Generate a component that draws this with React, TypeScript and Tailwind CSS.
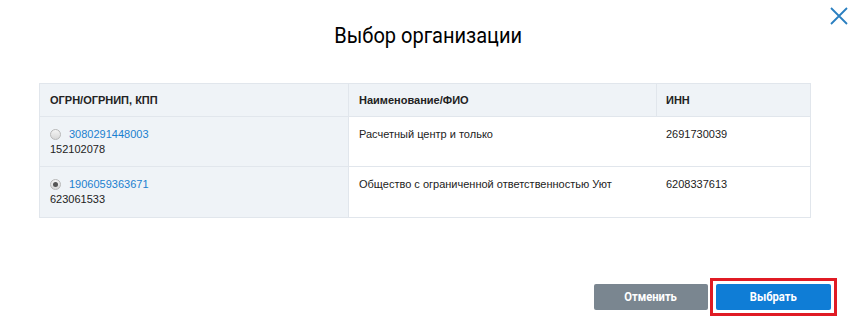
import React from "react";

const rows = [
  { ogrn: "3080291448003", kpp: "152102078", name: "Расчетный центр и только", inn: "2691730039", checked: false },
  { ogrn: "1906059363671", kpp: "623061533", name: "Общество с ограниченной ответственностью Уют", inn: "6208337613", checked: true },
];

export default function App() {
  return (
    <div className="w-[857px] h-[327px] bg-white relative overflow-hidden" style={{ fontFamily: "'Liberation Sans', Arial, sans-serif" }}>
      <button className="absolute left-[830px] top-[7px] w-[18px] h-[18px]">
        <svg width="18" height="18" viewBox="0 0 18 18">
          <path d="M1 1 L17 17 M17 1 L1 17" stroke="#2a7fc0" strokeWidth="1.8" fill="none" />
        </svg>
      </button>
      <div className="flex flex-col h-full">
        <h1 className="text-center text-[22px] leading-[26px] pt-[23px] text-black" style={{ fontFamily: "Roboto, sans-serif" }}>
          <span className="inline-block scale-x-[0.91]">Выбор организации</span>
        </h1>
        <div className="pl-[39px] pt-[34px]">
          <div className="w-[772px] border border-[#e1e6ec] text-[11px] text-[#222]">
            <div className="grid grid-cols-[309px_308px_1fr] bg-[#eff3f7] h-[33px] items-center font-bold text-[11px] border-b border-[#e1e6ec]">
              <div className="pl-[10px] h-full flex items-center border-r border-[#e1e6ec]">ОГРН/ОГРНИП, КПП</div>
              <div className="pl-[10px] h-full flex items-center border-r border-[#e1e6ec]">Наименование/ФИО</div>
              <div className="pl-[9px]">ИНН</div>
            </div>
            {rows.map((r, i) => (
              <div key={i} className={`grid grid-cols-[309px_308px_1fr] h-[50px] ${i === 0 ? "border-b border-[#e1e6ec]" : ""}`}>
                <div className="bg-[#eff3f7] border-r border-[#e1e6ec] pl-[10px] pt-[10px] leading-[15px]">
                  <div className="flex items-center">
                    <span className="w-[11px] h-[11px] rounded-full border border-[#b8b8b8] bg-gradient-to-b from-[#f4f4f4] to-[#d8d8d8] flex items-center justify-center mr-[8px]">
                      {r.checked && <span className="w-[5px] h-[5px] rounded-full bg-[#555]" />}
                    </span>
                    <span className="text-[#1b7fcf]">{r.ogrn}</span>
                  </div>
                  <div>{r.kpp}</div>
                </div>
                <div className="pl-[10px] pt-[10px] leading-[15px]">{r.name}</div>
                <div className="pl-[9px] pt-[10px] leading-[15px]">{r.inn}</div>
              </div>
            ))}
          </div>
        </div>
        <div className="mt-auto flex justify-end items-center pr-[20px] pb-[11px]" style={{ fontFamily: "Roboto, sans-serif" }}>
          <button className="w-[114px] h-[26px] rounded-[2px] bg-[#7a8690] text-white text-[13px] font-bold mr-[2px]">
            <span className="inline-block scale-x-[0.86]">Отменить</span>
          </button>
          <div className="border-[3px] border-[#e01b24] p-[3px]">
            <button className="w-[115px] h-[26px] rounded-[2px] bg-[#0f7dd6] text-white text-[13px] font-bold block">
              <span className="inline-block scale-x-[0.86]">Выбрать</span>
            </button>
          </div>
        </div>
      </div>
    </div>
  );
}
